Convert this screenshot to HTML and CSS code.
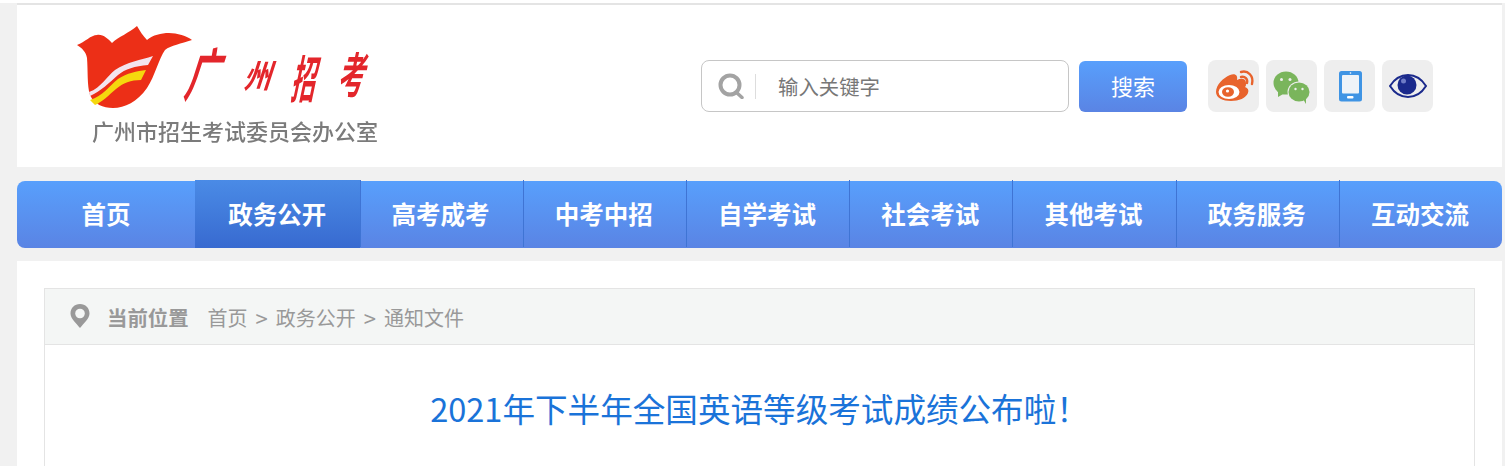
FILE: index.html
```html
<!DOCTYPE html>
<html lang="zh-CN">
<head>
    <meta charset="utf-8">
    <title>2021年下半年全国英语等级考试成绩公布啦！</title>
    <link rel="stylesheet" href="styles.css">
</head>
<body>
    <div class="page">
        <!-- Header -->
        <div class="header">
            <div class="logo">
                <svg class="logo-mark" width="310" height="90" viewBox="0 0 310 90">
                    <path d="M0 19C8 16 14 9 20 9C26 8 31 13 35 17C41 11 52 7 60 0C63 5 66 10 70 14C76 9 84 7 92 7C100 7 110 10 115 14C104 18 94 19 88 24C82 32 78 50 70 62C60 76 48 82 36 82C26 82 17 78 13 69C10 60 11 44 10 32C9 26 5 22 0 19Z" fill="#ec2f17"/>
                    <path d="M12 66C24 62 30 50 38 44C50 36 64 34 76 30L71 39C58 40 48 43 41 49C32 57 24 65 13 70Z" fill="#f3e4ee"/>
                    <path d="M13 74C26 70 32 60 41 53C50 47 60 45 69 44L64 54C54 54 46 57 39 63C32 69 25 76 18 79Z" fill="#f5d80e"/>
                    <g class="brush">
                        <text transform="translate(106 70) skewX(-18) scale(.62 1.1)" class="brush-lg">广</text>
                        <text transform="translate(166 62) skewX(-18) scale(.8 .95)" class="brush-sm">州</text>
                        <text transform="translate(213 72) skewX(-12) scale(.55 1.15)" class="brush-md">招</text>
                        <text transform="translate(260 67) skewX(-12) scale(.6 1.1)" class="brush-md">考</text>
                    </g>
                </svg>
                <div class="logo-caption">广州市招生考试委员会办公室</div>
            </div>
            <div class="search">
                <div class="search-box">
                    <svg class="search-icon" width="26" height="26" viewBox="0 0 26 26">
                        <circle cx="12" cy="12" r="9.500" fill="none" stroke="#a3a3a3" stroke-width="4"/>
                        <path d="M18.500 19.500L24 24.500" stroke="#a3a3a3" stroke-width="3.500" stroke-linecap="round"/>
                    </svg>
                    <span class="search-line"></span>
                    <span class="search-hint">输入关键字</span>
                </div>
                <button type="button" class="search-btn">搜索</button>
            </div>
            <div class="shares">
                <span class="share">
                    <svg width="51" height="52" viewBox="0 0 51 52">
                        <path d="M8 32C8 25 15 18 22 15C27 13 30 15 29 20C33 18 38 18 38 23C38 25 38 26 37 27C40 28 41 30 40 33C38 38 31 41 23 41C15 41 8 38 8 32Z" fill="#e8632c"/>
                        <ellipse cx="21" cy="32" rx="10.500" ry="7" fill="#fff"/>
                        <ellipse cx="20" cy="32" rx="6" ry="4.800" fill="#e8632c"/>
                        <circle cx="19.500" cy="31" r="1.600" fill="#fff"/>
                        <path d="M33 17C37 16 40 19 39 23M33 12C40 10 46 16 44 24" fill="none" stroke="#e8632c" stroke-width="2.400" stroke-linecap="round"/>
                    </svg>
                </span>
                <span class="share">
                    <svg width="51" height="52" viewBox="0 0 51 52">
                        <ellipse cx="20" cy="23" rx="12.500" ry="11.500" fill="#7ab55c"/>
                        <path d="M12 31L12 37L19 33Z" fill="#7ab55c"/>
                        <ellipse cx="33" cy="32" rx="11.500" ry="10.500" fill="#eee"/>
                        <ellipse cx="33" cy="32" rx="10.500" ry="9.500" fill="#7ab55c"/>
                        <path d="M37 39L40 44L40 37Z" fill="#7ab55c"/>
                        <circle cx="15.500" cy="19.500" r="1.500" fill="#eee"/>
                        <circle cx="24" cy="19.500" r="1.500" fill="#eee"/>
                        <circle cx="29.500" cy="29" r="1.200" fill="#eee"/>
                        <circle cx="36.500" cy="29" r="1.200" fill="#eee"/>
                    </svg>
                </span>
                <span class="share">
                    <svg width="51" height="52" viewBox="0 0 51 52">
                        <rect x="15" y="11" width="23" height="30.500" rx="2.500" fill="#3f94e4"/>
                        <rect x="18" y="15" width="17" height="18.500" rx="1" fill="#eef3f8"/>
                        <rect x="23" y="36" width="6.500" height="2.500" rx="1" fill="#fff"/>
                        <circle cx="26.500" cy="13" r="0.800" fill="#fff"/>
                    </svg>
                </span>
                <span class="share">
                    <svg width="51" height="52" viewBox="0 0 51 52">
                        <path d="M8 26C13 18 19 15 26 15C33 15 39 18 44 26C39 34 33 37 26 37C19 37 13 34 8 26Z" fill="#eee" stroke="#1b2a8c" stroke-width="2"/>
                        <circle cx="25" cy="25" r="9.500" fill="#1b2a8c"/>
                        <circle cx="21.500" cy="21" r="2.500" fill="#6f7cc6"/>
                    </svg>
                </span>
            </div>
        </div>

        <!-- Nav -->
        <div class="nav">
            <a class="nav-item nav-first">首页</a>
            <a class="nav-item active">政务公开</a>
            <a class="nav-item">高考成考</a>
            <a class="nav-item">中考中招</a>
            <a class="nav-item">自学考试</a>
            <a class="nav-item">社会考试</a>
            <a class="nav-item">其他考试</a>
            <a class="nav-item">政务服务</a>
            <a class="nav-item">互动交流</a>
        </div>

        <!-- Article -->
        <div class="main">
            <div class="article">
                <div class="crumbs">
                    <svg class="pin" width="20" height="24" viewBox="0 0 20 24">
                        <path d="M10 0C15.500 0 19.500 4 19.500 9.500C19.500 14.500 14 19 10 24C6 19 0.500 14.500 0.500 9.500C0.500 4 4.500 0 10 0Z" fill="#999"/>
                        <circle cx="10" cy="9.500" r="4.800" fill="#f4f6f5"/>
                    </svg>
                    <b class="crumbs-label">当前位置</b>
                    <span class="crumbs-path">
                        <span>首页</span>
                        <span class="crumbs-sep">&gt;</span>
                        <span>政务公开</span>
                        <span class="crumbs-sep">&gt;</span>
                        <span>通知文件</span>
                    </span>
                </div>
                <h1 class="title">2021年下半年全国英语等级考试成绩公布啦！</h1>
            </div>
        </div>
    </div>
</body>
</html>
```

FILE: styles.css
```css
* {
    box-sizing: border-box;
    margin: 0;
    padding: 0;
}

body {
    font-family: "Noto Sans CJK SC", "Noto Sans", sans-serif;
    background: #f1f1f1;
    color: #333;
    border-top: 3px solid #fff;
}

.page {
    width: 1485px;
    height: 463px;
    margin-left: 17px;
    border-top: 2px solid #e4e4e4;
    overflow: hidden;
}

/* Header */
.header {
    display: flex;
    height: 162px;
    background: #fff;
    align-items: flex-start;
}
.logo {
    width: 684px;
    padding-left: 60px;
    padding-top: 21px;
    filter: blur(0.4px);
}
.logo-mark {
    display: block;
}
.logo-caption {
    margin: -1px 0 0 15px;
    font-size: 22px;
    font-weight: 500;
    line-height: 30px;
    color: #7b7b7b;
}
.brush text {
    font-family: "Noto Sans CJK SC", sans-serif;
    font-weight: 700;
    fill: #e3262b;
}
.brush-lg { font-size: 52px; }
.brush-sm { font-size: 34px; }
.brush-md { font-size: 44px; }

/* Search */
.search {
    display: flex;
    gap: 10px;
    padding-top: 55px;
}
.search-box {
    display: flex;
    align-items: center;
    width: 368px;
    height: 52px;
    border: 1px solid #c6c6c6;
    border-radius: 8px;
    padding-left: 16px;
}
.search-icon {
    flex: none;
}
.search-line {
    width: 1px;
    height: 25px;
    margin-left: 11px;
    background: #ddd;
}
.search-hint {
    margin-left: 22px;
    font-size: 20.400px;
    line-height: 26px;
    padding-bottom: 1px;
    color: #777;
}
.search-btn {
    width: 108px;
    height: 51px;
    margin-top: 1px;
    padding-bottom: 3px;
    border: none;
    border-radius: 6px;
    font-family: inherit;
    font-size: 22px;
    color: #fff;
    background: linear-gradient(#589ffc, #5a84e4);
}

.shares {
    display: flex;
    gap: 7px;
    padding: 55px 0 0 21px;
}
.share {
    display: block;
    width: 51px;
    height: 52px;
    border-radius: 8px;
    background: #eee;
}
.share svg {
    display: block;
}

/* Nav */
.nav {
    display: flex;
    height: 67px;
    margin-top: 14px;
    border-radius: 8px;
    background: linear-gradient(#589ffc, #5a84e4);
}
.nav-item {
    flex: 1;
    height: 67px;
    margin-top: -1px;
    padding-right: 2px;
    border-left: 1px solid #3f74d4;
    font-size: 24.500px;
    font-weight: 700;
    line-height: 68px;
    text-align: center;
    color: #fff;
}
.nav-first {
    flex: none;
    width: 178px;
    padding-right: 0;
    border-left: none;
}
.nav-item.active {
    flex: none;
    width: 164.500px;
    height: 68px;
    padding-right: 0;
    border-left: none;
    background: linear-gradient(#4a8be6, #386ad0);
}

/* Article */
.main {
    height: 220px;
    margin-top: 13px;
    padding: 27px 27px 0;
    background: #fff;
}
.article {
    height: 400px;
    border: 1px solid #e4e4e4;
}
.crumbs {
    display: flex;
    align-items: center;
    height: 56px;
    padding-left: 25px;
    background: #f4f6f5;
    border-bottom: 1px solid #e4e4e4;
}
.pin {
    flex: none;
    margin-top: -2px;
}
.crumbs-label {
    margin-left: 17px;
    padding-top: 1px;
    font-size: 20.400px;
    color: #999;
}
.crumbs-path {
    display: flex;
    gap: 8px;
    margin-left: 19px;
    padding-top: 1px;
    font-size: 20px;
    color: #999;
}
.crumbs-sep {
    font-size: 22px;
    line-height: 28px;
}
.title {
    margin-top: 38px;
    font-size: 32.600px;
    font-weight: 400;
    line-height: 50px;
    text-align: center;
    color: #1a73d9;
}
```
